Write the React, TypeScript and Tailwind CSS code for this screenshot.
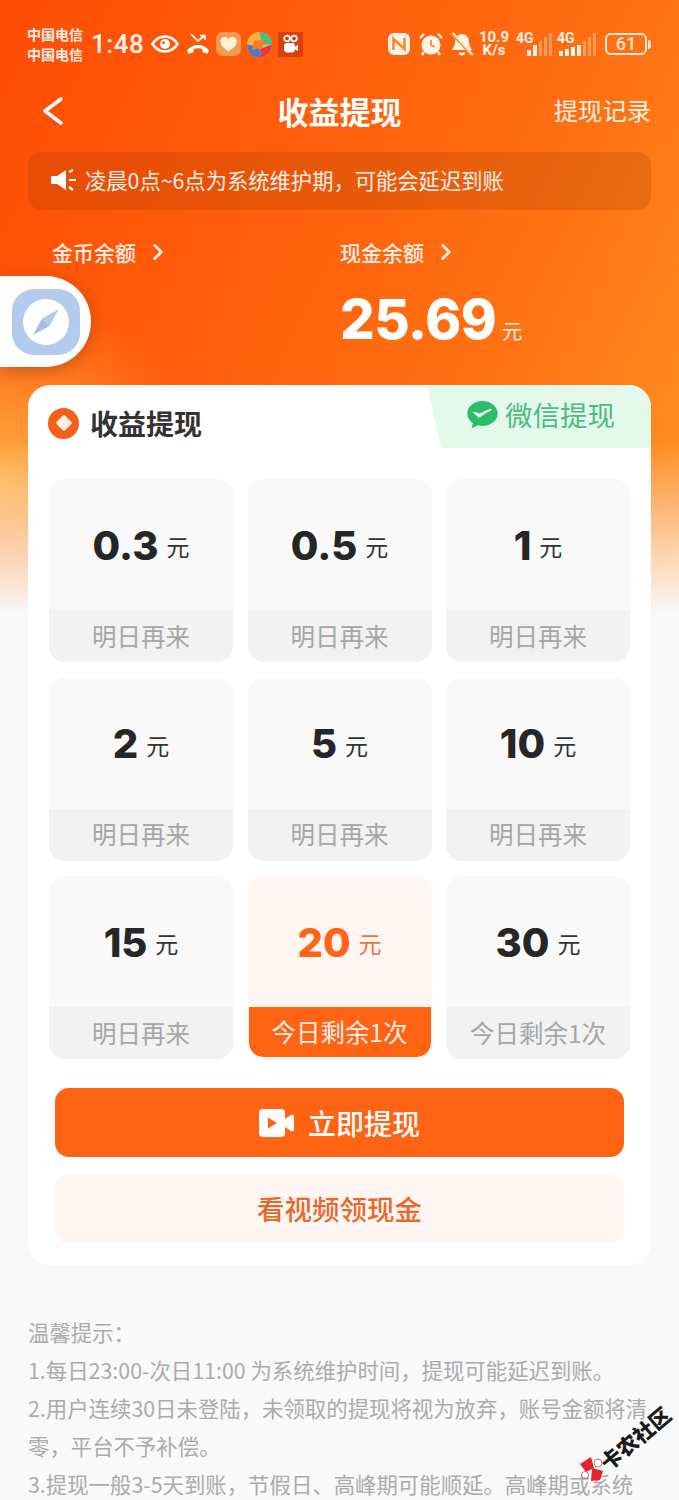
import React from 'react';
import { ChevronRight } from 'lucide-react';

const amounts = [
  { value: '0.3', label: '明日再来' },
  { value: '0.5', label: '明日再来' },
  { value: '1', label: '明日再来' },
  { value: '2', label: '明日再来' },
  { value: '5', label: '明日再来' },
  { value: '10', label: '明日再来' },
  { value: '15', label: '明日再来' },
  { value: '20', label: '今日剩余1次', active: true },
  { value: '30', label: '今日剩余1次' },
];

// 4G label sits on top of the bars, same as the phone's status bar
function Signal({ bars, width }: { bars: { h: number; on: boolean }[]; width: string }) {
  return (
    <div className={`relative h-[24px] flex items-end justify-end gap-[2px] ${width}`}>
      <span className="absolute top-[-1px] left-0 font-['Roboto',sans-serif] font-bold text-[14px] leading-[14px]">4G</span>
      {bars.map((b, i) => (
        <div
          key={i}
          className={b.on ? 'w-[4px] bg-white/90' : 'w-[3px] bg-white/30'}
          style={{ height: b.h }}
        />
      ))}
    </div>
  );
}

function StatusBar() {
  return (
    <div className="h-[84px] pt-[24px] pl-[27px] pr-[28px] flex items-start justify-between text-white">
      <div className="flex items-center h-[40px]">
        <div className="text-[14px] leading-[20px] font-bold w-[60px] text-white/90">
          <div>中国电信</div>
          <div>中国电信</div>
        </div>
        <span className="ml-[4px] text-[26px] font-medium font-['Roboto',sans-serif] tracking-[0.5px] text-white/95">1:48</span>
        <svg className="ml-[7px]" width="28" height="20" viewBox="0 0 28 20">
          <path d="M1.500 10C5 4.500 9 2.500 14 2.500S23 4.500 26.500 10C23 15.500 19 17.500 14 17.500S5 15.500 1.500 10Z" fill="none" stroke="#fff" strokeWidth="2.600" />
          <circle cx="14" cy="10" r="5" fill="#fff" />
          <circle cx="12.500" cy="8.500" r="1.600" fill="#ff6a10" />
        </svg>
        <svg className="ml-[7px]" width="24" height="22" viewBox="0 0 24 22">
          <path d="M5 1l7 7 6-5M14 2.500h5v4.500" fill="none" stroke="#fff" strokeWidth="1.700" />
          <path d="M1 17.500c5-7.500 17-7.500 22 0l-1.500 3.500-5-2v-3c-3-1-6-1-9 0v3l-5 2Z" fill="#fff" />
        </svg>
        <div className="ml-[6px] w-[25px] h-[24px] rounded-[7px] bg-[#f59a50] flex items-center justify-center">
          <svg width="17" height="15" viewBox="0 0 17 15">
            <path d="M8.500 14.500C3 10.500.5 8 .5 4.700A4.200 4.200 0 0 1 8.500 2.500 4.200 4.200 0 0 1 16.500 4.700C16.500 8 14 10.500 8.500 14.500Z" fill="#fff3e0" />
          </svg>
        </div>
        <svg className="ml-[6px]" width="25" height="25" viewBox="0 0 25 25">
          <circle cx="12.500" cy="12.500" r="12.500" fill="#f2b33a" />
          <path d="M12.500 0A12.500 12.500 0 0 1 25 12.500H15Z" fill="#3fc08c" />
          <path d="M25 12.500A12.500 12.500 0 0 1 14 25L13 17Z" fill="#e6344e" />
          <path d="M0 12.500A12.500 12.500 0 0 0 14 25L12 15Z" fill="#3b7dd8" />
          <path d="M7 9l10-2-2 9-10 2Z" fill="#ff7a18" />
        </svg>
        <div className="ml-[6px] w-[25px] h-[25px] bg-[#d8400f] flex items-center justify-center">
          <svg width="17" height="20" viewBox="0 0 17 20" fill="none" stroke="#fff" strokeWidth="1.800">
            <circle cx="5" cy="4.500" r="2.800" />
            <circle cx="12" cy="4.500" r="2.800" />
            <rect x="3" y="10" width="9" height="7.500" rx="2" fill="#fff" />
            <path d="M12.500 13l3.500-2v6l-3.500-2" fill="#fff" stroke="none" />
          </svg>
        </div>
      </div>
      <div className="flex items-center h-[40px] text-white/90">
        <svg width="22" height="22" viewBox="0 0 22 22">
          <rect x="0" y="0" width="22" height="22" rx="6" fill="#fff" fillOpacity="0.92" />
          <path d="M5.500 17V6l11 10V5" fill="none" stroke="#ff8a20" strokeWidth="2.600" />
        </svg>
        <svg className="ml-[9px]" width="24" height="24" viewBox="0 0 24 24">
          <circle cx="12" cy="13" r="9.500" fill="#fff" fillOpacity="0.92" />
          <path d="M12 8v5l3.500 2" fill="none" stroke="#ff8a20" strokeWidth="1.800" />
          <path d="M1 6l4-4M23 6l-4-4M5 20l-2 3M19 20l2 3" stroke="#fff" strokeWidth="2.400" />
        </svg>
        <svg className="ml-[7px]" width="24" height="24" viewBox="0 0 24 24">
          <path d="M12 2a7 7 0 0 0-7 7c0 5-2 7-3 9h20c-1-2-3-4-3-9a7 7 0 0 0-7-7Z" fill="#fff" fillOpacity="0.92" />
          <path d="M9 20.500a3 3 0 0 0 6 0Z" fill="#fff" fillOpacity="0.92" />
          <path d="M2 1l20 22" stroke="#ff9a28" strokeWidth="3.400" />
          <path d="M3 1l20 22" stroke="#fff" strokeWidth="1.600" />
        </svg>
        <div className="ml-[4px] w-[32px] text-center font-['Roboto',sans-serif] font-bold text-[15px] leading-[13px]">
          <div>10.9</div>
          <div>K/s</div>
        </div>
        <Signal
          width="ml-[6px] w-[36px]"
          bars={[
            { h: 6, on: true },
            { h: 11, on: true },
            { h: 15, on: false },
            { h: 19, on: false },
            { h: 23, on: false },
          ]}
        />
        <Signal
          width="ml-[5px] w-[39px]"
          bars={[
            { h: 5, on: true },
            { h: 7, on: true },
            { h: 9, on: true },
            { h: 11, on: true },
            { h: 15, on: false },
            { h: 19, on: false },
            { h: 23, on: false },
          ]}
        />
        <div className="ml-[9px] flex items-center">
          <div className="w-[42px] h-[22px] rounded-[6px] border-2 border-white/85 flex items-center justify-center">
            <span className="font-['Roboto',sans-serif] font-medium text-[18px] leading-none text-white/80">61</span>
          </div>
          <div className="ml-[1px] w-[3px] h-[9px] rounded-r-sm bg-white/85" />
        </div>
      </div>
    </div>
  );
}

function Cell({ value, label, active }: { value: string; label: string; active?: boolean }) {
  return (
    <div className={`h-[183px] rounded-[16px] overflow-hidden flex flex-col ${active ? 'bg-[#fff6f3] border-x-[1.500px] border-b-[2px] border-[#fff6f3]' : 'bg-[#f9f9f9]'}`}>
      <div className="h-[131px] shrink-0 flex items-center justify-center pt-[2px]">
        <span className={`font-['Inter',sans-serif] font-extrabold text-[40px] leading-none ${active ? 'text-[#ff6314]' : 'text-[#262626]'}`}>{value}</span>
        <span className={`ml-[8px] mt-[2px] text-[23px] leading-none ${active ? 'text-[#f0733a]' : 'text-[#333333]'}`}>元</span>
      </div>
      <div className={`flex-1 flex items-center justify-center text-[24.500px] ${active ? 'rounded-b-[14px] bg-[#ff6314] text-white/90' : 'bg-[#f2f2f2] text-[#a6a6a6]'}`}>
        {label}
      </div>
    </div>
  );
}

export default function App() {
  return (
    <div className="relative w-[679px] h-[1500px] overflow-hidden bg-[#f9f9f9] bg-[linear-gradient(180deg,rgba(249,249,249,0)_440px,#f9f9f9_615px),radial-gradient(200px_190px_at_0px_480px,rgba(255,180,70,0.95),rgba(255,180,70,0)),linear-gradient(115deg,#ff4d05_0%,#ff5f0c_28%,#ff7414_50%,#ffa028_76%,#ffc83e_100%)] font-['Noto_Sans_CJK_SC','Noto_Sans',sans-serif]">
      <StatusBar />

      <div className="h-[56px] px-[28px] flex items-center justify-between relative text-white pb-[3px]">
        <svg width="48" height="32" viewBox="0 0 48 32" fill="none" stroke="#fff" strokeWidth="3.600" strokeLinecap="round" strokeLinejoin="round">
          <path d="M33 4 L17 16 L33 28" />
        </svg>
        <div className="absolute left-0 right-0 text-center text-[31px] font-bold leading-none">收益提现</div>
        <div className="text-[24.300px] leading-none text-white/90">提现记录</div>
      </div>

      <div className="mx-[28px] mt-[12px] h-[58px] rounded-[14px] bg-[#8a3000]/20 flex items-center pl-[23px] pb-[3px] text-white/90">
        <svg width="26" height="22" viewBox="0 0 26 22" fill="#fff">
          <path d="M0 7h6l9-6v20l-9-6H0Z" />
          <path d="M18 3l4-2M18 11h7M18 18l4 3" stroke="#fff" strokeWidth="2.200" fill="none" />
        </svg>
        <span className="ml-[8px] text-[21.300px] leading-none">凌晨0点~6点为系统维护期，可能会延迟到账</span>
      </div>

      <div className="h-[175px] px-[52px] pt-[27px] flex text-white">
        <div className="w-[288px]">
          <div className="flex items-center h-[30px] text-white/90">
            <span className="text-[21px] font-medium leading-none">金币余额</span>
            <ChevronRight className="ml-[9px]" size={26} strokeWidth={2.600} />
          </div>
        </div>
        <div>
          <div className="flex items-center h-[30px] text-white/90">
            <span className="text-[21px] font-medium leading-none">现金余额</span>
            <ChevronRight className="ml-[9px]" size={26} strokeWidth={2.600} />
          </div>
          <div className="flex items-end mt-[19px]">
            <span className="font-['Inter',sans-serif] font-extrabold text-[54.500px] tracking-[-0.500px] leading-[66px]">25.69</span>
            <span className="ml-[6px] mb-[11px] text-[20px] leading-none text-white/90">元</span>
          </div>
        </div>
      </div>

      <div className="relative mx-[28px] h-[880px] rounded-[22px] bg-white overflow-hidden">
        <div className="h-[94px] pl-[20px] flex items-center pb-[18px]">
          <div className="w-[31px] h-[31px] rounded-full bg-[#f4601a] flex items-center justify-center">
            <div className="w-[12px] h-[12px] rotate-45 rounded-[2px] bg-[#fff1e6]" />
          </div>
          <span className="ml-[11px] text-[28px] font-bold leading-none text-[#333333]">收益提现</span>
        </div>

        <div className="absolute top-0 right-0 w-[224px] h-[63px] rounded-tr-[22px] bg-[#e3f9ec] [clip-path:polygon(0_0,100%_0,100%_100%,14px_100%)] flex items-center pl-[39px] pb-[4px]">
          <svg width="33" height="30" viewBox="0 0 32 30">
            <path d="M16 1C7.500 1 .8 6.500.8 13.500c0 4 2.200 7.500 5.700 9.800L5 28.500l6.200-3.200c1.500.4 3.100.6 4.800.6 8.500 0 15.200-5.500 15.200-12.400S24.500 1 16 1Z" fill="#2dbb6c" />
            <path d="M7.500 12.500l5 4.500c4-3 8-5.500 12-7.500-4 1-8 3-11.500 4.800Z" fill="#e3f9ec" stroke="#e3f9ec" strokeWidth="1.500" strokeLinejoin="round" />
          </svg>
          <span className="ml-[6px] text-[27.500px] leading-none text-[#4dba82]">微信提现</span>
        </div>

        <div className="px-[21px] grid grid-cols-3 gap-x-[14.500px] gap-y-[15.500px]">
          {amounts.map(item => (
            <Cell key={item.value} value={item.value} label={item.label} active={item.active} />
          ))}
        </div>

        <div className="mx-[27px] mt-[29px] h-[69px] rounded-[14px] bg-[#ff6314] flex items-center justify-center text-white">
          <svg width="35" height="28" viewBox="0 0 35 28">
            <rect x="0" y="0" width="26" height="28" rx="4" fill="#fff" />
            <path d="M26 10l6-4q3-1 3 1v14q0 2-3 1l-6-4Z" fill="#fff" />
            <path d="M9 8.500l9 5.500-9 5.500Z" fill="#ff6314" />
          </svg>
          <span className="ml-[14px] text-[28px] font-medium leading-none">立即提现</span>
        </div>

        <div className="mx-[27px] mt-[18px] h-[68px] rounded-[14px] bg-[#fff6f3] flex items-center justify-center">
          <span className="text-[27.500px] font-medium leading-none text-[#e8682c]">看视频领现金</span>
        </div>
      </div>

      <div className="mt-[48px] px-[28px] text-[21.400px] leading-[38px] text-[#ababab]">
        <p>温馨提示：</p>
        <p>1.每日23:00-次日11:00 为系统维护时间，提现可能延迟到账。</p>
        <p>2.用户连续30日未登陆，未领取的提现将视为放弃，账号金额将清零，平台不予补偿。</p>
        <p>3.提现一般3-5天到账，节假日、高峰期可能顺延。高峰期或系统</p>
      </div>

      {/* floating ball */}
      <div className="absolute left-0 top-[276px] w-[91px] h-[91px] rounded-r-[46px] bg-white shadow-[0_4px_16px_rgba(120,50,0,0.4)] flex items-center pl-[12px]">
        <div className="w-[68px] h-[66px] rounded-[22px] bg-[#b3cbed] flex items-center justify-center">
          <svg width="46" height="46" viewBox="0 0 46 46">
            <circle cx="23" cy="23" r="23" fill="#fff" />
            <path d="M36 10 L26.500 27 L19 19.500 Z" fill="#b3cbed" />
            <path d="M10 36 L19 19.500 L26.500 27 Z" fill="#a4bfe6" />
          </svg>
        </div>
      </div>

      {/* watermark */}
      <svg className="absolute left-[578px] top-[1452px]" width="30" height="32" viewBox="0 0 30 32">
        <path d="M2 12l11-7 3 11-8 4Z" fill="#e3242b" />
        <path d="M14 16l11 3-3 9-9 1Z" fill="#e3242b" />
        <circle cx="20" cy="11" r="4" fill="#fff" stroke="#222" strokeWidth="0.500" />
        <circle cx="7" cy="23" r="3.500" fill="#fff" stroke="#222" strokeWidth="0.500" />
      </svg>
      <span className="absolute left-[593px] top-[1427px] w-[86px] -rotate-[40deg] text-[21px] font-black leading-none text-[#1a1a1a] whitespace-nowrap">卡农社区</span>
    </div>
  );
}
